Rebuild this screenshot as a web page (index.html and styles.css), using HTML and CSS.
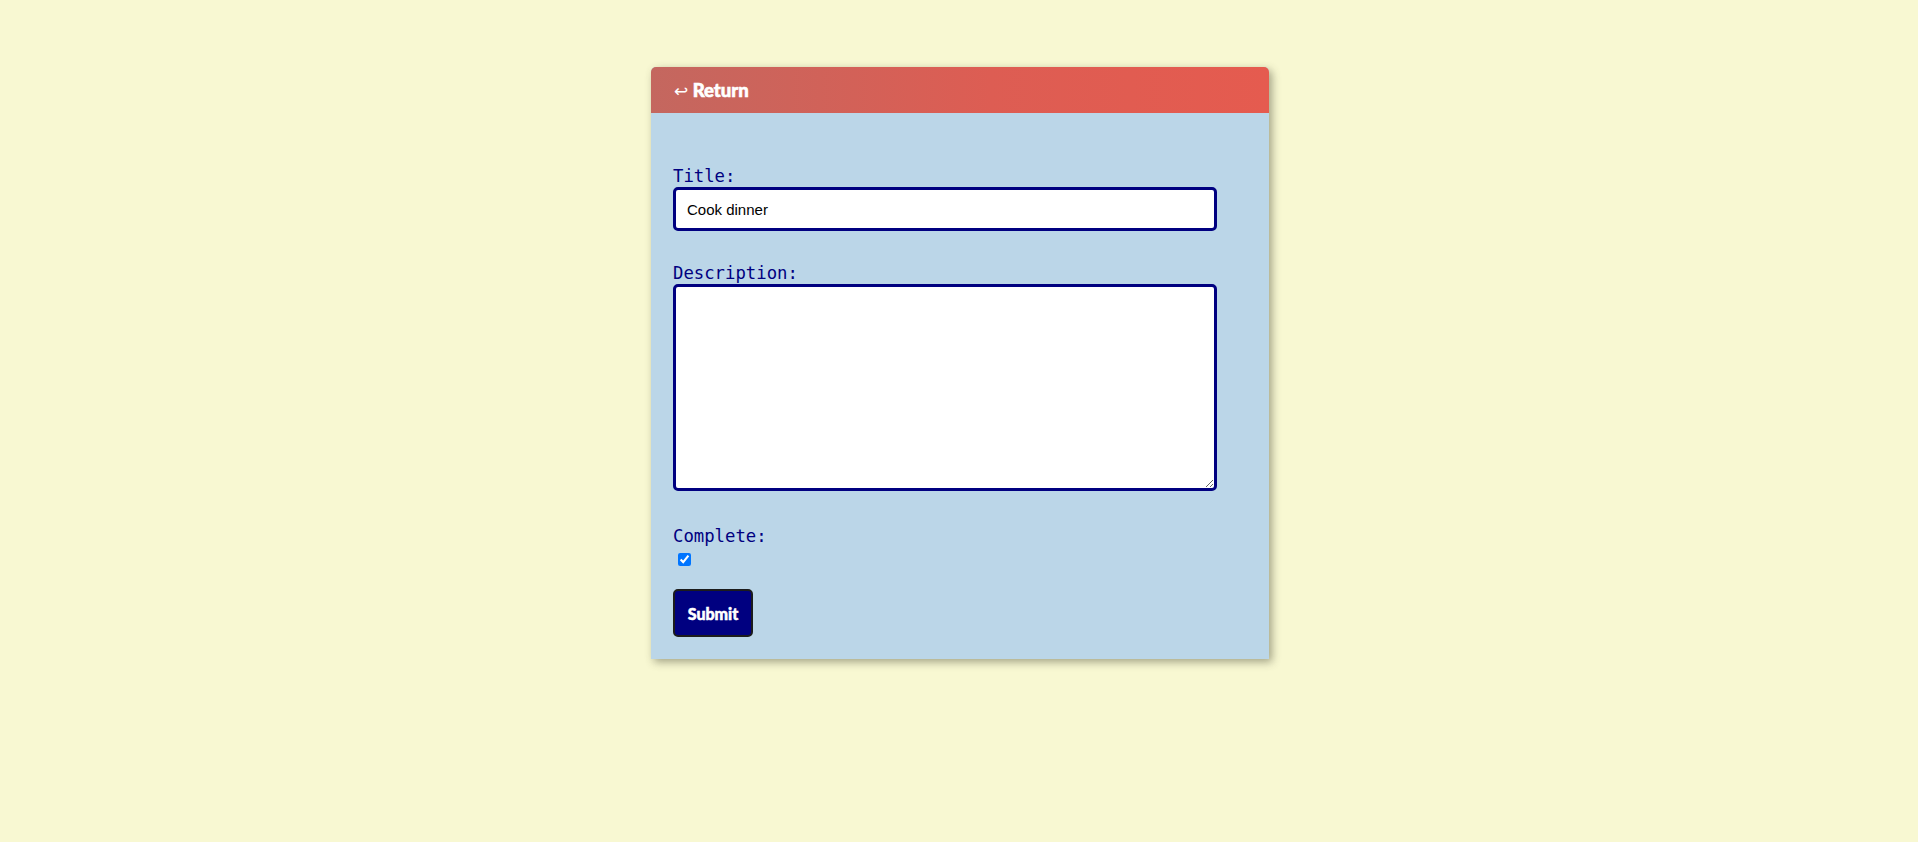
FILE: index.html
```html
<!DOCTYPE html>
<html lang="en">
<head>
<meta charset="utf-8">
<title>Edit task</title>
<link rel="stylesheet" href="styles.css">
</head>
<body>
<div class="page">
  <div class="card">
    <div class="header">
      <a class="return" href="#"><span class="arrow">↩</span> Return</a>
    </div>
    <form class="form">
      <label class="field-label" for="title">Title:</label>
      <input class="text-input" id="title" type="text" value="Cook dinner">
      <label class="field-label desc-label" for="desc">Description:</label>
      <textarea class="text-area" id="desc"></textarea>
      <label class="field-label complete-label" for="complete">Complete:</label>
      <input class="check" id="complete" type="checkbox" checked>
      <button class="submit" type="button">Submit</button>
    </form>
  </div>
</div>
</body>
</html>
```

FILE: styles.css
```css
html, body {
  margin: 0;
  padding: 0;
}

body {
  background: #f8f8d2;
  font-family: "Liberation Sans", Arial, sans-serif;
  height: 842px;
}

.page {
  display: flex;
  justify-content: center;
  padding-top: 67px;
  padding-left: 2px;
}

.card {
  width: 618px;
  background: #bbd6e8;
  border-radius: 5px 5px 0 0;
  box-shadow: 3px 3px 8px rgba(60, 60, 40, 0.45);
}

.header {
  height: 46px;
  display: flex;
  align-items: center;
  padding-left: 23px;
  border-radius: 5px 5px 0 0;
  background: linear-gradient(to right, #c4675f, #dd5d53 55%, #e55b4f);
}

.return {
  color: #ffffff;
  text-decoration: none;
  font-family: Lato, sans-serif;
  font-weight: 900;
  font-size: 18.5px;
  line-height: 22px;
  -webkit-text-stroke: 0.6px #ffffff;
}

.arrow {
  font-family: "DejaVu Sans", sans-serif;
  font-weight: 400;
  font-size: 17px;
  -webkit-text-stroke: 0;
}

.form {
  display: flex;
  flex-direction: column;
  align-items: flex-start;
  padding: 53px 22px 22px 22px;
}

.field-label {
  display: block;
  font-family: "DejaVu Sans Mono", "Liberation Mono", monospace;
  font-size: 17.3px;
  line-height: 20px;
  color: #000080;
}

.text-input {
  display: block;
  box-sizing: border-box;
  width: 544px;
  height: 44px;
  margin: 1px 0 0 0;
  padding: 0 11px;
  border: 3px solid #000080;
  border-radius: 5px;
  background: #ffffff;
  font-family: "Liberation Sans", Arial, sans-serif;
  font-size: 15px;
  color: #000000;
  outline: none;
}

.desc-label {
  margin-top: 32px;
}

.text-area {
  display: block;
  box-sizing: border-box;
  width: 544px;
  height: 207px;
  margin: 1px 0 0 0;
  padding: 8px 11px;
  border: 3px solid #000080;
  border-radius: 5px;
  background: #ffffff;
  font-family: "Liberation Sans", Arial, sans-serif;
  font-size: 15px;
  outline: none;
}

.complete-label {
  margin-top: 35px;
}

.check {
  display: block;
  width: 13px;
  height: 13px;
  margin: 7px 0 0 5px;
}

.submit {
  margin-top: 23px;
  width: 80px;
  height: 48px;
  box-sizing: border-box;
  background: #000080;
  border: 2px solid #1c1c1c;
  border-radius: 5px;
  color: #ffffff;
  font-family: Lato, sans-serif;
  font-weight: 900;
  font-size: 16px;
  padding: 0;
  -webkit-text-stroke: 0.5px #ffffff;
  cursor: pointer;
}
```
